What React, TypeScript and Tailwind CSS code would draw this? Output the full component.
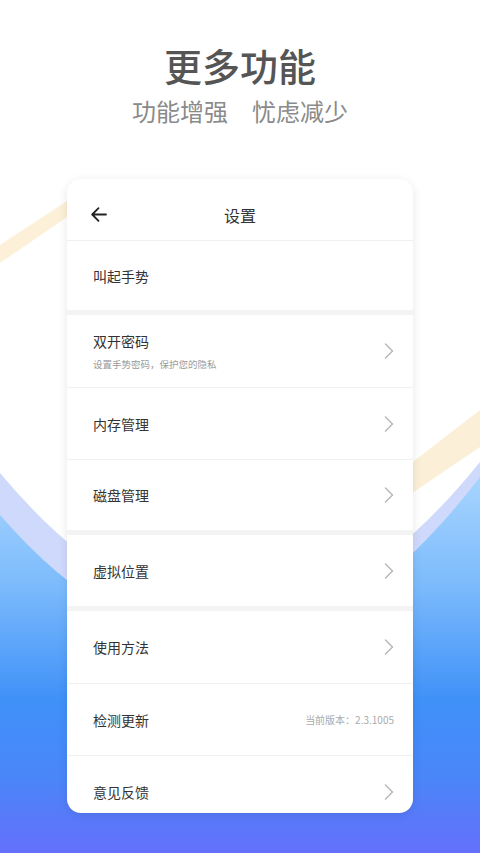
import React from "react";

const FONT = { fontFamily: '"Noto Sans CJK SC", "Noto Sans", sans-serif' };

function Chevron() {
  return (
    <svg width="10" height="16" viewBox="0 0 10 16" fill="none">
      <polyline points="1.5,1 8.5,8 1.5,15" stroke="#b8b8b8" strokeWidth="1.5" strokeLinecap="round" strokeLinejoin="round" />
    </svg>
  );
}

function Row({ title, h, right, sub }: { title: string; h: string; right?: React.ReactNode; sub?: string }) {
  return (
    <div className={`flex items-center justify-between pl-[26px] pr-[19px] ${h}`}>
      {sub ? (
        <div className="flex flex-col">
          <span className="text-[14px] leading-[20px] text-[#333]">{title}</span>
          <span className="mt-[6px] text-[9.5px] leading-[14px] text-[#9a9a9a]">{sub}</span>
        </div>
      ) : (
        <span className="text-[14px] leading-[20px] text-[#333]">{title}</span>
      )}
      {right === undefined ? <Chevron /> : right}
    </div>
  );
}

const Thin = () => <div className="h-px bg-[#f0f0f0]" />;
const Thick = () => <div className="h-[5px] bg-[#f4f4f4]" />;

export default function App() {
  return (
    <div className="relative w-[480px] h-[853px] overflow-hidden bg-white" style={FONT}>
      <svg className="absolute inset-0" width="480" height="853" viewBox="0 0 480 853">
        <defs>
          <linearGradient id="blue" x1="0" y1="470" x2="0" y2="853" gradientUnits="userSpaceOnUse">
            <stop offset="0" stopColor="#aad6fe" />
            <stop offset="0.3" stopColor="#7cbbfc" />
            <stop offset="0.6" stopColor="#3f91f8" />
            <stop offset="0.8" stopColor="#4a86f9" />
            <stop offset="1" stopColor="#6470fb" />
          </linearGradient>
        </defs>
        <polygon points="0,245 70,199 70,215 0,263" fill="#fdf0d8" />
        <polygon points="405,468 480,410 480,447 405,498" fill="#fcefd8" />
        <path d="M0,473 Q240,760 480,462 L480,853 L0,853 Z" fill="#cfd9fc" />
        <path d="M0,515 Q240,790 480,477 L480,853 L0,853 Z" fill="url(#blue)" />
      </svg>

      <div className="relative flex flex-col items-center">
        <h1 className="mt-[45px] text-[38px] leading-[40px] font-medium text-[#555]">更多功能</h1>
        <p className="mt-[12px] text-[24px] leading-[28px] text-[#8a8a8a]">功能增强　忧虑减少</p>

        <div className="mt-[54px] w-[346px] h-[634px] overflow-hidden rounded-[14px] bg-white shadow-[0_2px_10px_rgba(0,0,0,0.1)]">
          <div className="relative flex h-[61px] items-center justify-center pt-[10px]">
            <svg className="absolute left-[24px] top-[28px]" width="16" height="15" viewBox="0 0 16 15" fill="none">
              <path d="M15 7.5H1.5M7.5 1.2L1.2 7.5L7.5 13.8" stroke="#222" strokeWidth="1.8" strokeLinecap="round" strokeLinejoin="round" />
            </svg>
            <span className="text-[16px] leading-[22px] text-[#333]">设置</span>
          </div>
          <Thin />
          <Row title="叫起手势" h="h-[69px]" right={null} />
          <Thick />
          <Row title="双开密码" sub="设置手势密码，保护您的隐私" h="h-[72px]" />
          <Thin />
          <Row title="内存管理" h="h-[71px]" />
          <Thin />
          <Row title="磁盘管理" h="h-[70px]" />
          <Thick />
          <Row title="虚拟位置" h="h-[71px]" />
          <Thick />
          <Row title="使用方法" h="h-[72px]" />
          <Thin />
          <Row
            title="检测更新"
            h="h-[71px]"
            right={<span className="text-[10px] leading-[14px] text-[#aaa]">当前版本：2.3.1005</span>}
          />
          <Thin />
          <Row title="意见反馈" h="h-[71px]" />
        </div>
      </div>
    </div>
  );
}
